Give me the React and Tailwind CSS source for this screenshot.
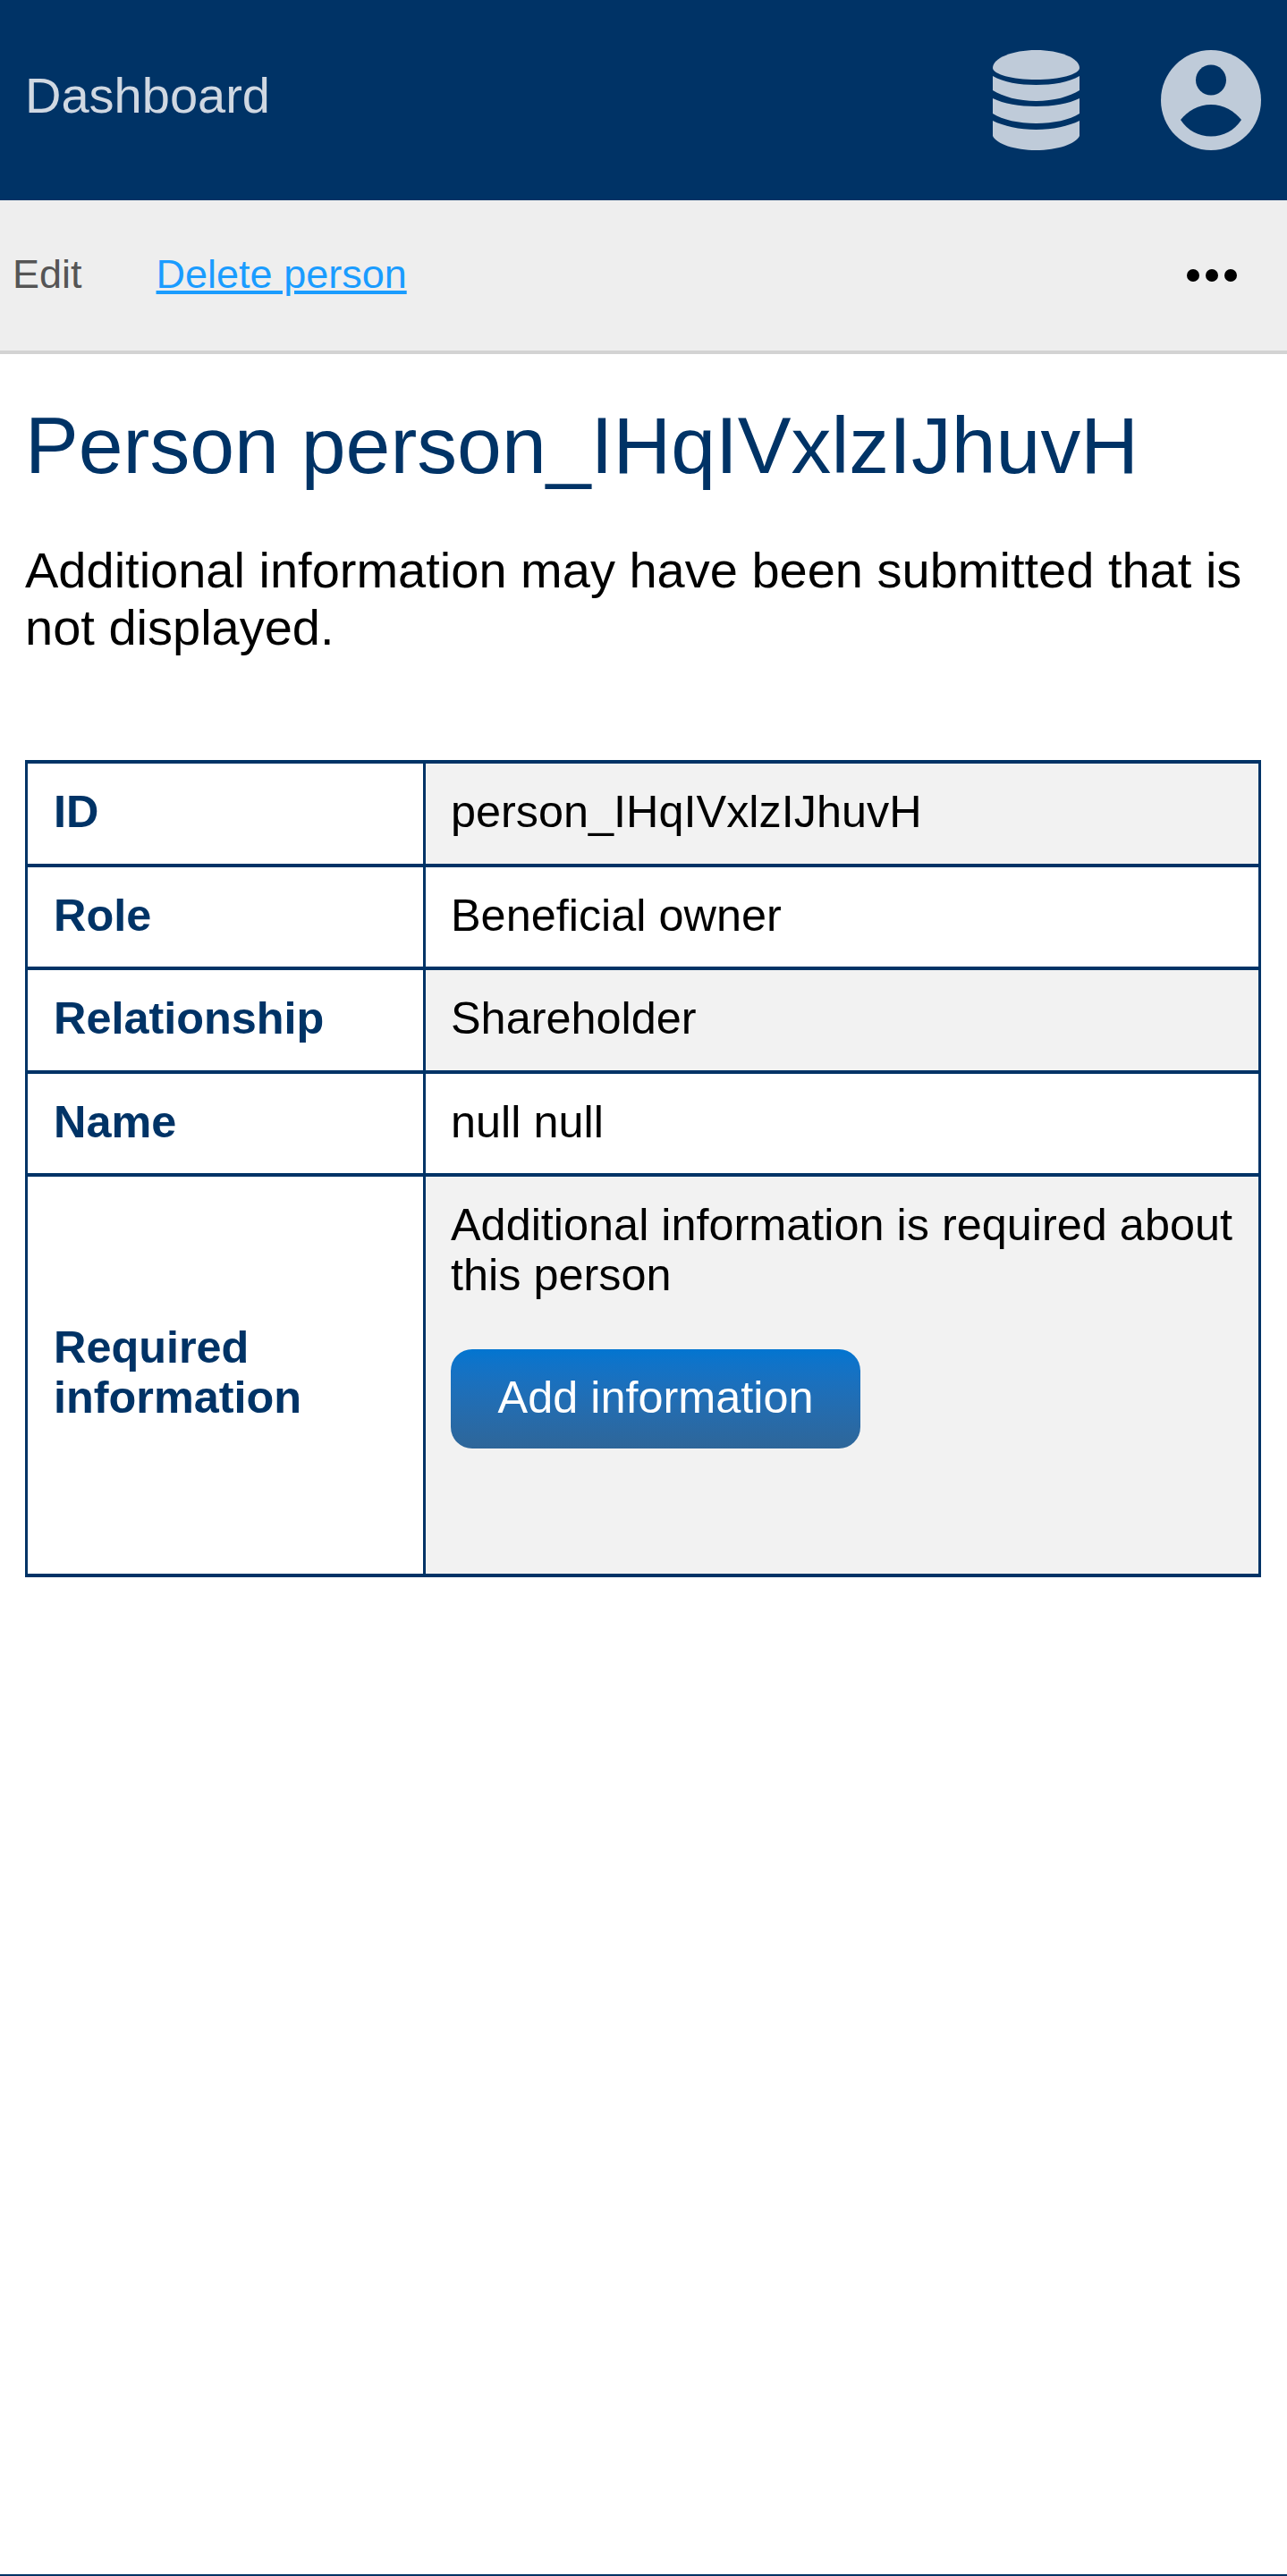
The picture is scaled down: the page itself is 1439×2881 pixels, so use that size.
const rows = [
  { label: 'ID', value: 'person_IHqIVxlzIJhuvH', shaded: true },
  { label: 'Role', value: 'Beneficial owner' },
  { label: 'Relationship', value: 'Shareholder', shaded: true },
  { label: 'Name', value: 'null null' },
];

function DatabaseIcon() {
  return (
    <svg width="97" height="112" viewBox="0 0 97 112" className="fill-[#bfcbd9]">
      <path d="M0 20C0 9 22 0 48.5 0S97 9 97 20C97 27 75 33 48.5 33S0 27 0 20Z" />
      <path d="M0 29C12 36 30 39 48.5 39S85 36 97 29V45C86 52 68 57 48.5 57S11 52 0 45Z" />
      <path d="M0 54C12 60 30 63 48.5 63S85 60 97 54V71C86 78 68 82 48.5 82S11 78 0 71Z" />
      <path d="M0 79C12 85 30 89 48.5 89S85 85 97 79V96C93 105 72 112 48.5 112S4 105 0 96Z" />
    </svg>
  );
}

function UserIcon() {
  return (
    <svg width="112" height="112" viewBox="0 0 112 112">
      <circle cx="56" cy="56" r="56" className="fill-[#bfcbd9]" />
      <circle cx="56" cy="33.5" r="17" className="fill-[#003366]" />
      <path
        d="M22 78C30 68 42 61 56 61S82 68 90 78C82 90 70 96.5 56 96.5S30 90 22 78Z"
        className="fill-[#003366]"
      />
    </svg>
  );
}

export default function App() {
  return (
    <div className="min-h-[2881px] flex flex-col bg-white font-['Liberation_Sans',Arial,sans-serif] border-b-2 border-[#003366]">
      <header className="h-[224px] bg-[#003366] flex items-center justify-between pl-[28px] pr-[29px]">
        <a className="text-[56px] text-[#d0d8e2] leading-none pb-[11px]">Dashboard</a>
        <div className="flex items-center gap-[91px]">
          <DatabaseIcon />
          <UserIcon />
        </div>
      </header>

      <nav className="h-[172px] bg-[#eeeeee] border-b-4 border-[#d3d3d3] flex items-center justify-between pl-[14px] pr-[56px] text-[45px]">
        <div className="flex items-center gap-[83px] pb-[2px]">
          <span className="text-[#555555]">Edit</span>
          <a className="text-[#1a9cff] underline">Delete person</a>
        </div>
        <div className="flex items-center gap-[7px]">
          <span className="w-[14px] h-[14px] rounded-full bg-black" />
          <span className="w-[14px] h-[14px] rounded-full bg-black" />
          <span className="w-[14px] h-[14px] rounded-full bg-black" />
        </div>
      </nav>

      <main className="px-[28px]">
        <h1 className="text-[89.6px] leading-[105px] text-[#003366] mt-[50px]">Person person_IHqIVxlzIJhuvH</h1>
        <p className="text-[56px] leading-[64px] text-black mt-[55px]">
          Additional information may have been submitted that is not displayed.
        </p>

        <table className="w-[1382px] mt-[116px] border-collapse table-fixed text-[50.4px] leading-[56px]">
          <colgroup>
            <col className="w-[445px]" />
            <col />
          </colgroup>
          <tbody>
            {rows.map((row) => (
              <tr key={row.label} className="h-[115.5px]">
                <th className="border-x-[3px] border-y-[4px] border-[#003366] pl-[29px] pr-[28px] pb-[3px] text-left font-bold text-[#003366]">{row.label}</th>
                <td className={`border-x-[3px] border-y-[4px] border-[#003366] px-[28px] pb-[3px] text-black ${row.shaded ? 'bg-[#f2f2f2]' : ''}`}>
                  {row.value}
                </td>
              </tr>
            ))}
            <tr className="h-[446px]">
              <th className="border-x-[3px] border-y-[4px] border-[#003366] pl-[29px] pr-[28px] pb-[7px] text-left font-bold text-[#003366]">
                Required information
              </th>
              <td className="border-x-[3px] border-y-[4px] border-[#003366] px-[28px] pt-[26px] pb-[140px] bg-[#f2f2f2] align-top text-black">
                <p>Additional information is required about this person</p>
                <button className="mt-[55px] w-[458px] h-[111px] pb-[4px] rounded-[24px] bg-linear-to-b from-[#0275d0] to-[#2e6699] text-white text-[50.4px]">
                  Add information
                </button>
              </td>
            </tr>
          </tbody>
        </table>
      </main>
    </div>
  );
}
